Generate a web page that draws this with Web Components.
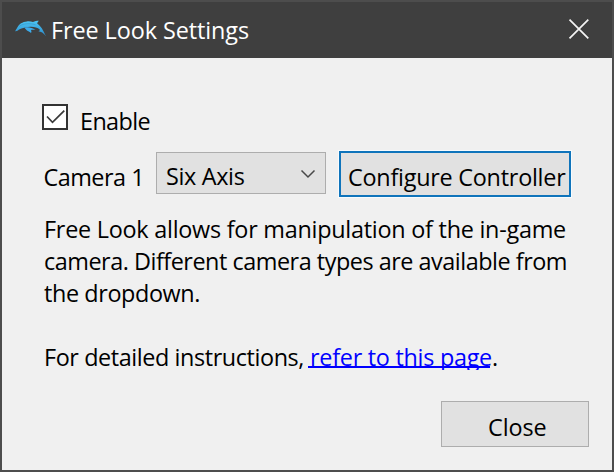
<!DOCTYPE html>
<html lang="en">
<head>
<meta charset="utf-8">
<title>Free Look Settings</title>
<style>
html, body { margin: 0; height: 100%; overflow: hidden; background: #4d4d4d; }
body { font: 23.4px/32px "Open Sans", "Noto Sans", sans-serif; color: #000; }
</style>
</head>
<body>
<free-look-dialog></free-look-dialog>
<script>
// A single line of text whose tracking is adjusted to fill a given advance width.
class FitText extends HTMLElement {
  connectedCallback() {
    const root = this.attachShadow({ mode: "open" });
    root.innerHTML = `<style>
      :host { display: block; flex: none; height: 32px; white-space: pre; width: ${this.getAttribute("width")}px; }
      span { display: inline-block; white-space: pre; }
    </style><span><slot></slot></span>`;
    const span = root.querySelector("span");
    const target = Number(this.getAttribute("width"));
    const count = this.textContent.length;
    span.style.letterSpacing = (target - span.getBoundingClientRect().width) / count + "px";
  }
}
customElements.define("fit-text", FitText);

class DolphinLogo extends HTMLElement {
  constructor() {
    super();
    this.attachShadow({ mode: "open" }).innerHTML = `<style>
      :host { display: block; width: 32px; height: 17px; }
      svg { display: block; }
    </style>
    <svg width="32" height="17" viewBox="0 0 32 17">
      <defs><linearGradient id="g" x1="0" y1="0" x2="0" y2="1"><stop offset="0" stop-color="#4cc6f5"/><stop offset="1" stop-color="#2b8bcb"/></linearGradient></defs>
      <path fill="url(#g)" d="M.2 11.200C.8 9.800 1.600 9 2.300 7.600C3.800 4 7.500 1.700 12 1.400C14.400 1.200 16.400 1.600 18 2.100C19.700 1.200 21.700.8 23.900.8C22.800 1.700 22.300 2.600 22.300 3.700C26.300 6.200 27.900 10 30.900 16C28.100 12.700 26.400 11.700 23.300 11.300C24.600 10.700 25 10.100 24.700 9.400C22.700 7.400 19.100 6.600 15.400 6.700C12 6.700 10.100 7.700 7.300 8.200C5.100 8.600 4 9.500 2.900 10.400C2 11 .9 10.900.2 11.200Z"/>
      <path fill="#3cacec" d="M9.400 7.700C13 6.500 17 7.600 20.600 9.900C18.500 9.600 17.300 9.700 15.900 9.900C16.600 11 16.600 12 16 13C14.500 11.500 12.200 11 10.800 9.200Z"/>
      <path fill="none" stroke="#246f9e" stroke-width=".5" opacity=".55" d="M4.300 6.300C8 3.400 14.500 2.900 20.500 4.700"/>
    </svg>`;
  }
}
customElements.define("dolphin-logo", DolphinLogo);

class TitleBar extends HTMLElement {
  constructor() {
    super();
    this.attachShadow({ mode: "open" }).innerHTML = `<style>
      :host { display: flex; box-sizing: border-box; height: 56px; padding: 12px 22px 0 13px; background: #3f3f3f; color: #fff; }
      dolphin-logo { margin-top: 6px; }
      ::slotted(*) { margin-left: 4px; }
      .x { margin: 5px 0 0 auto; width: 22px; height: 20px; }
    </style>
    <dolphin-logo></dolphin-logo><slot></slot>
    <svg class="x" viewBox="0 0 22 20"><path d="M1.500 .6L20.300 19.400M20.300 .6L1.500 19.400" stroke="#f4f4f4" stroke-width="1.700" fill="none"/></svg>`;
  }
}
customElements.define("title-bar", TitleBar);

class CheckBox extends HTMLElement {
  constructor() {
    super();
    this.attachShadow({ mode: "open" }).innerHTML = `<style>
      :host { display: flex; gap: 12px; height: 32px; }
      .box { box-sizing: border-box; flex: none; width: 26px; height: 26px; border: 2px solid #333; background: #fff; }
      svg { display: block; }
      .label { margin-top: 1px; }
    </style>
    <div class="box"><svg width="22" height="22"><path d="M3 10.500L8.500 16.300L20.300 4.700" fill="none" stroke="#3a3a3a" stroke-width="1.700"/></svg></div>
    <div class="label"><slot></slot></div>`;
  }
}
customElements.define("check-box", CheckBox);

class PushButton extends HTMLElement {
  constructor() {
    super();
    this.attachShadow({ mode: "open" }).innerHTML = `<style>
      :host { display: flex; box-sizing: border-box; width: 148px; height: 46px; border: 1px solid #adadad; background: #e1e1e1; padding: 9px 0 0 46px; }
      :host([default]) { width: 232px; border: 2px solid #0f74bb; padding: 8px 0 0 7px; box-shadow: 0 0 0 1px #f6fbfe; }
    </style><slot></slot>`;
  }
}
customElements.define("push-button", PushButton);

class ComboBox extends HTMLElement {
  constructor() {
    super();
    this.attachShadow({ mode: "open" }).innerHTML = `<style>
      :host { display: flex; box-sizing: border-box; width: 170px; height: 42px; border: 1px solid #adadad; background: #e1e1e1; padding: 7px 9px 0; }
      svg { margin: 9px 0 0 auto; }
    </style><slot></slot>
    <svg width="16" height="10"><path d="M1.500 1.500L8 8L14.500 1.500" fill="none" stroke="#484848" stroke-width="1.500"/></svg>`;
  }
}
customElements.define("combo-box", ComboBox);

class HelpLink extends HTMLElement {
  constructor() {
    super();
    this.attachShadow({ mode: "open" }).innerHTML = `<style>
      :host { display: block; margin-left: 4px; width: 184px; height: 32px; clip-path: inset(0 0 3px 0); color: #00f;
        background: linear-gradient(#00f, #00f) 0 25px / 182px 2px no-repeat; }
      ::slotted(*) { margin-left: 2px; }
    </style><slot></slot>`;
  }
}
customElements.define("help-link", HelpLink);

class FreeLookDialog extends HTMLElement {
  constructor() {
    super();
    this.attachShadow({ mode: "open" }).innerHTML = `<style>
      :host { display: flex; flex-direction: column; box-sizing: border-box; width: 614px; height: 472px; border: 2px solid #4d4d4d; background: #f0f0f0; }
      main { display: flex; flex-direction: column; flex: 1; padding: 46px 23px 0 40px; }
      .row { display: flex; align-items: flex-start; margin-top: 15px; height: 46px; }
      .row > fit-text { margin: 10px 0 0 1.500px; }
      combo-box { margin: 1px 13px 0 12px; }
      .copy { margin: 16px 0 0 2px; }
      .more { display: flex; margin-top: 32px; }
      push-button.close { align-self: flex-end; margin-top: 28px; }
    </style>
    <title-bar><fit-text width="198">Free Look Settings</fit-text></title-bar>
    <main>
      <check-box><fit-text width="70">Enable</fit-text></check-box>
      <div class="row">
        <fit-text width="100.500">Camera 1</fit-text>
        <combo-box><fit-text width="78.500">Six Axis</fit-text></combo-box>
        <push-button default><fit-text width="217.500">Configure Controller</fit-text></push-button>
      </div>
      <div class="copy">
        <fit-text width="522">Free Look allows for manipulation of the in-game</fit-text>
        <fit-text width="523">camera. Different camera types are available from</fit-text>
        <fit-text width="156">the dropdown.</fit-text>
        <div class="more">
          <fit-text width="260">For detailed instructions,</fit-text>
          <help-link><fit-text width="182">refer to this page</fit-text></help-link>
          <fit-text width="6">.</fit-text>
        </div>
      </div>
      <push-button class="close"><fit-text width="58.500">Close</fit-text></push-button>
    </main>`;
  }
}
customElements.define("free-look-dialog", FreeLookDialog);
</script>
</body>
</html>
